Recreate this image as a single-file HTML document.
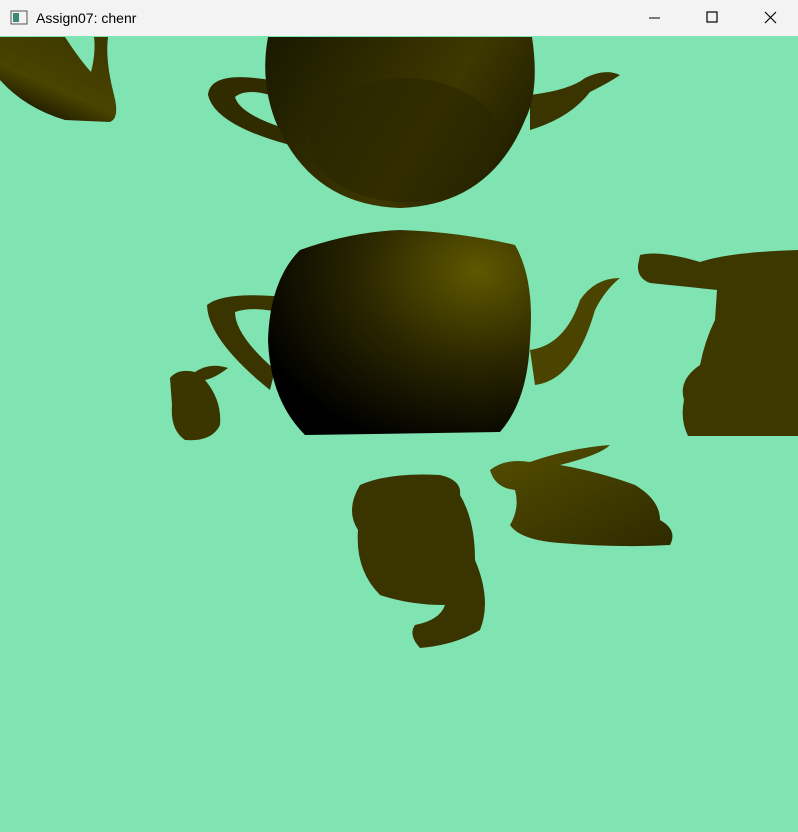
<!DOCTYPE html>
<html><head><style>
body{margin:0;width:798px;height:832px;overflow:hidden;background:#80e3b2;font-family:"Liberation Sans",sans-serif}
.tb{position:absolute;left:0;top:0;width:798px;height:36px;background:#f3f3f3;}
.tb span{position:absolute;left:36px;top:10px;font-size:14px;color:#000}
</style></head><body>
<div class="tb">
<svg width="798" height="36" style="position:absolute;left:0;top:0">
<rect x="11" y="11" width="16" height="13" fill="none" stroke="#555" stroke-width="1"/>
<rect x="13" y="13" width="6" height="9" fill="#3a8a7a"/>
<line x1="649" y1="18" x2="660" y2="18" stroke="#000"/>
<rect x="707" y="12" width="10" height="10" fill="none" stroke="#000" stroke-width="1.2"/>
<path d="M765 12 L776 23 M776 12 L765 23" stroke="#000" stroke-width="1.2"/>
</svg>
<span>Assign07: chenr</span></div>
<svg width="798" height="796" style="position:absolute;left:0;top:36px" viewBox="0 36 798 796">
<defs>
<linearGradient id="g1" x1="0" y1="0" x2="1" y2="0.4"><stop offset="0" stop-color="#1a1800"/><stop offset="0.7" stop-color="#3d3800"/><stop offset="1" stop-color="#252200"/></linearGradient>
<radialGradient id="g2" cx="0.8" cy="0.2" r="0.9"><stop offset="0" stop-color="#5f5800"/><stop offset="0.5" stop-color="#2a2600"/><stop offset="1" stop-color="#000"/></radialGradient>
<linearGradient id="g3" x1="0" y1="0" x2="1" y2="1"><stop offset="0" stop-color="#554e00"/><stop offset="1" stop-color="#2e2a00"/></linearGradient>
<linearGradient id="g4" x1="0" y1="1" x2="0.6" y2="0"><stop offset="0" stop-color="#000"/><stop offset="0.5" stop-color="#4a4400"/><stop offset="1" stop-color="#3e3900"/></linearGradient>
</defs>
<!-- top-left spout -->
<path d="M0 37 L65 37 Q80 60 91 72 Q96 52 94 37 L108 37 Q105 60 114 95 Q120 118 110 122 L65 120 Q25 108 0 80 Z" fill="url(#g4)"/>
<!-- teapot 1 -->
<path d="M270 80 Q210 70 208 95 Q215 125 290 145 L290 130 Q240 115 235 97 Q245 88 270 95 Z" fill="#302c00"/>
<path d="M530 95 Q570 90 585 78 Q605 68 620 75 Q610 82 590 92 Q570 118 530 130 Z" fill="#3a3500"/>
<path d="M268 37 L532 37 Q540 90 525 120 Q490 205 400 208 Q310 205 275 120 Q260 80 268 37 Z" fill="url(#g1)"/>
<ellipse cx="405" cy="140" rx="95" ry="62" fill="#2a2600" opacity="0.6"/>
<!-- teapot 2 -->
<path d="M295 298 Q225 290 207 305 Q208 340 270 390 L275 370 Q235 335 235 312 Q255 305 290 315 Z" fill="#3a3500"/>
<path d="M530 350 Q565 345 580 300 Q595 278 620 278 Q605 290 595 310 Q575 380 535 385 Z" fill="#4a4400"/>
<path d="M300 250 Q350 232 400 230 Q460 232 515 245 Q535 280 530 340 Q528 400 500 432 L305 435 Q270 400 268 340 Q270 280 300 250 Z" fill="url(#g2)"/>
<!-- right bunny -->
<path d="M640 255 Q660 250 700 262 Q730 252 798 250 L798 436 L688 436 Q680 420 684 400 Q678 380 700 365 Q705 340 715 320 L717 290 Q690 287 650 283 Q637 278 638 265 Z" fill="#3d3800"/>
<!-- small bunny -->
<path d="M170 378 Q178 368 195 372 Q210 362 228 368 Q215 378 205 380 Q222 400 220 425 Q212 442 185 440 Q170 430 172 405 Z" fill="#3b3600"/>
<!-- lying bunny -->
<path d="M490 470 Q505 458 530 462 Q570 448 610 445 Q600 455 560 465 Q600 472 635 485 Q660 500 660 520 Q678 530 670 545 Q620 548 560 543 Q520 540 510 525 Q520 508 515 490 Q495 488 490 470 Z" fill="url(#g3)"/>
<!-- upside bunny -->
<path d="M360 485 Q390 472 440 475 Q462 480 460 495 Q475 520 475 560 Q492 600 480 630 Q455 645 420 648 Q408 635 415 625 Q440 620 445 605 Q410 605 380 595 Q355 570 358 530 Q345 510 360 485 Z" fill="#3a3500"/>
</svg>
</body></html>
